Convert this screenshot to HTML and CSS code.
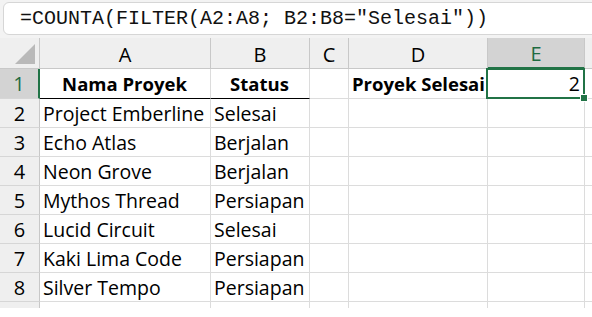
FILE: index.html
```html
<!DOCTYPE html>
<html lang="id">
<head>
    <meta charset="UTF-8">
    <title>Proyek Selesai</title>
    <link rel="stylesheet" href="styles.css">
</head>
<body>
    <div class="formula-area">
        <div class="formula-bar">=COUNTA(FILTER(A2:A8; B2:B8="Selesai"))</div>
    </div>
    <div class="sheet">
        <!-- column headers -->
        <div class="corner"><span class="corner-tri"></span></div>
        <div class="col-head">A</div>
        <div class="col-head">B</div>
        <div class="col-head">C</div>
        <div class="col-head">D</div>
        <div class="col-head active">E</div>
        <div class="col-head"></div>

        <!-- row 1 -->
        <div class="row-head active">1</div>
        <div class="cell title">Nama Proyek</div>
        <div class="cell title">Status</div>
        <div class="cell"></div>
        <div class="cell bold">Proyek Selesai</div>
        <div class="cell num selected">2</div>
        <div class="cell"></div>

        <div class="row-head">2</div>
        <div class="cell">Project Emberline</div>
        <div class="cell">Selesai</div>
        <div class="cell"></div><div class="cell"></div><div class="cell"></div><div class="cell"></div>

        <div class="row-head">3</div>
        <div class="cell">Echo Atlas</div>
        <div class="cell">Berjalan</div>
        <div class="cell"></div><div class="cell"></div><div class="cell"></div><div class="cell"></div>

        <div class="row-head">4</div>
        <div class="cell">Neon Grove</div>
        <div class="cell">Berjalan</div>
        <div class="cell"></div><div class="cell"></div><div class="cell"></div><div class="cell"></div>

        <div class="row-head">5</div>
        <div class="cell">Mythos Thread</div>
        <div class="cell">Persiapan</div>
        <div class="cell"></div><div class="cell"></div><div class="cell"></div><div class="cell"></div>

        <div class="row-head">6</div>
        <div class="cell">Lucid Circuit</div>
        <div class="cell">Selesai</div>
        <div class="cell"></div><div class="cell"></div><div class="cell"></div><div class="cell"></div>

        <div class="row-head">7</div>
        <div class="cell">Kaki Lima Code</div>
        <div class="cell">Persiapan</div>
        <div class="cell"></div><div class="cell"></div><div class="cell"></div><div class="cell"></div>

        <div class="row-head">8</div>
        <div class="cell">Silver Tempo</div>
        <div class="cell">Persiapan</div>
        <div class="cell"></div><div class="cell"></div><div class="cell"></div><div class="cell"></div>

        <div class="row-head"></div>
        <div class="cell"></div><div class="cell"></div><div class="cell"></div>
        <div class="cell"></div><div class="cell"></div><div class="cell"></div>
    </div>
</body>
</html>
```

FILE: styles.css
```css
body {
    margin: 0;
    background: #fff;
    font-family: "Open Sans", "Liberation Sans", sans-serif;
    color: #000;
}

.formula-area {
    background: #f3f3f3;
    height: 38px;
    padding: 2px 0 0 3px;
    box-sizing: border-box;
    overflow: hidden;
}

.formula-bar {
    height: 33px;
    box-sizing: border-box;
    margin-right: -10px;
    background: #fff;
    border: 1px solid #d6d6d6;
    border-radius: 6px;
    padding: 0 0 0 16px;
    font-family: "Liberation Mono", "DejaVu Sans Mono", monospace;
    font-size: 20px;
    line-height: 31px;
    color: #111;
    white-space: nowrap;
}

.sheet {
    display: grid;
    grid-template-columns: 40px 171px 99px 39px 139px 97px 1fr;
    grid-template-rows: 31px 30px repeat(7, 29px) 20px;
    height: 270px;
    overflow: hidden;
    font-size: 19.5px;
}

.corner {
    position: relative;
    background: #efefef;
    border-right: 1px solid #c8c8c8;
    border-bottom: 1px solid #c8c8c8;
}

.corner-tri {
    position: absolute;
    right: 4px;
    bottom: 4px;
    width: 0;
    height: 0;
    border-left: 20px solid transparent;
    border-bottom: 20px solid #b9b9b9;
}

.col-head {
    background: #efefef;
    border-right: 1px solid #c8c8c8;
    border-bottom: 1px solid #c8c8c8;
    display: flex;
    align-items: center;
    justify-content: center;
    font-size: 20px;
    padding-top: 2px;
}

.col-head.active {
    background: #d3d3d3;
    color: #1e6b41;
    border-bottom: 2px solid #217346;
}

.row-head {
    background: #efefef;
    border-right: 1px solid #c8c8c8;
    border-bottom: 1px solid #d6d6d6;
    display: flex;
    align-items: center;
    justify-content: center;
    font-size: 20px;
}

.row-head.active {
    background: #d3d3d3;
    color: #1e6b41;
    border-right: 2px solid #217346;
}

.cell {
    border-right: 1px solid #dcdcdc;
    border-bottom: 1px solid #dcdcdc;
    display: flex;
    align-items: center;
    padding: 0 4px 0 3px;
    white-space: nowrap;
    overflow: visible;
    min-width: 0;
}

.cell.title {
    font-weight: bold;
    font-size: 18.5px;
    justify-content: center;
    border-bottom: 1px solid #000;
}

.cell.bold {
    font-weight: bold;
    font-size: 18.5px;
}

.cell.num {
    justify-content: flex-end;
}

.cell.selected {
    position: relative;
}

.cell.selected::before {
    content: "";
    position: absolute;
    left: -2px;
    top: -1px;
    right: -1px;
    bottom: -1px;
    border: 2px solid #217346;
}

.cell.selected::after {
    content: "";
    position: absolute;
    right: -4px;
    bottom: -4px;
    width: 6px;
    height: 6px;
    background: #217346;
    border: 1px solid #fff;
}
```
